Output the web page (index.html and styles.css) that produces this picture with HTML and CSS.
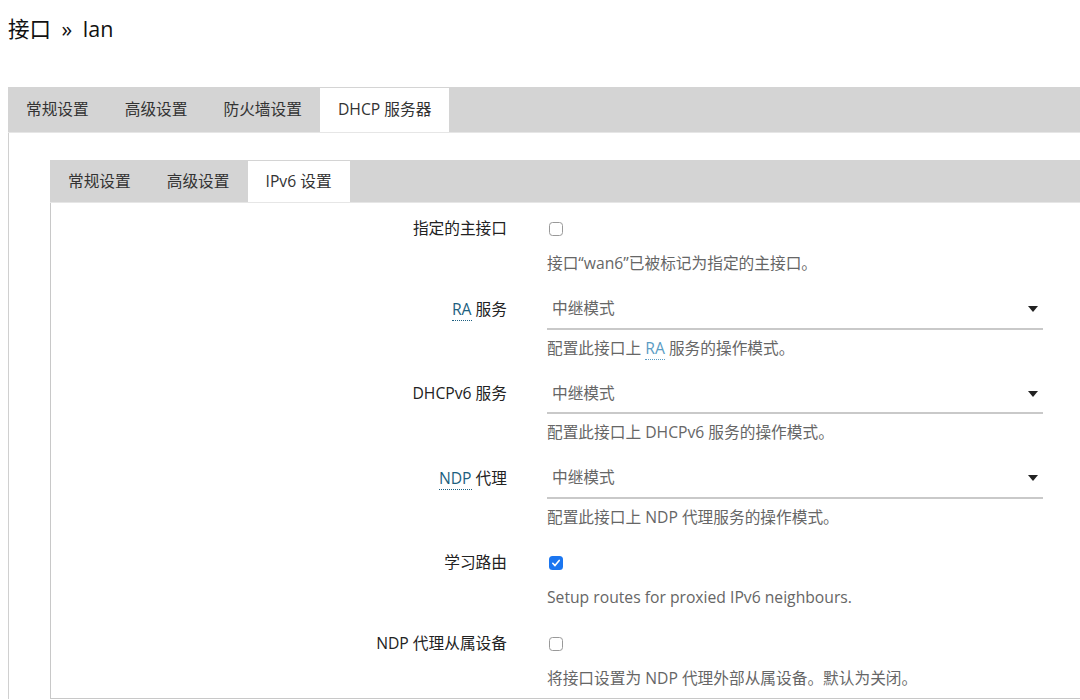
FILE: index.html
```html
<!DOCTYPE html>
<html lang="zh-CN">
<head>
    <meta charset="UTF-8">
    <meta name="viewport" content="width=device-width, initial-scale=1.0">
    <title>接口 » lan</title>
    <link rel="stylesheet" href="styles.css">
</head>
<body>
    <h2 class="page-title">接口 » lan</h2>

    <div class="outer">
        <ul class="tabs tabs-outer">
            <li class="tab">常规设置</li>
            <li class="tab">高级设置</li>
            <li class="tab">防火墙设置</li>
            <li class="tab active">DHCP 服务器</li>
        </ul>

        <div class="outer-body">
            <div class="inner">
                <ul class="tabs tabs-inner">
                    <li class="tab">常规设置</li>
                    <li class="tab">高级设置</li>
                    <li class="tab active">IPv6 设置</li>
                </ul>

                <div class="form">
                    <div class="row">
                        <label class="label">指定的主接口</label>
                        <div class="field check">
                            <div class="control"><span class="cbox"></span></div>
                            <div class="desc">接口“wan6”已被标记为指定的主接口。</div>
                        </div>
                    </div>

                    <div class="row">
                        <label class="label"><abbr>RA</abbr> 服务</label>
                        <div class="field">
                            <div class="control select"><span>中继模式</span><i class="arrow"></i></div>
                            <div class="desc">配置此接口上 <abbr class="light">RA</abbr> 服务的操作模式。</div>
                        </div>
                    </div>

                    <div class="row">
                        <label class="label">DHCPv6 服务</label>
                        <div class="field">
                            <div class="control select"><span>中继模式</span><i class="arrow"></i></div>
                            <div class="desc">配置此接口上 DHCPv6 服务的操作模式。</div>
                        </div>
                    </div>

                    <div class="row">
                        <label class="label"><abbr>NDP</abbr> 代理</label>
                        <div class="field">
                            <div class="control select"><span>中继模式</span><i class="arrow"></i></div>
                            <div class="desc">配置此接口上 NDP 代理服务的操作模式。</div>
                        </div>
                    </div>

                    <div class="row">
                        <label class="label">学习路由</label>
                        <div class="field check">
                            <div class="control">
                                <svg class="cbox-on" width="14" height="14" viewBox="0 0 14 14">
                                    <rect x="0" y="0" width="14" height="14" rx="3.5" fill="#1b76f0"/>
                                    <path d="M3.8 7.3 L6 9.6 L10.2 4.4" fill="none" stroke="#fff" stroke-width="1.6" stroke-linecap="round" stroke-linejoin="round"/>
                                </svg>
                            </div>
                            <div class="desc">Setup routes for proxied IPv6 neighbours.</div>
                        </div>
                    </div>

                    <div class="row">
                        <label class="label">NDP 代理从属设备</label>
                        <div class="field check">
                            <div class="control"><span class="cbox"></span></div>
                            <div class="desc">将接口设置为 NDP 代理外部从属设备。默认为关闭。</div>
                        </div>
                    </div>
                </div>
            </div>
        </div>
    </div>
</body>
</html>
```

FILE: styles.css
```css
body {
    margin: 0;
    font-family: "Open Sans", "Noto Sans CJK SC", sans-serif;
    font-size: 15.7px;
    color: #222;
    background: #fff;
    overflow: hidden;
}
.page-title {
    margin: 15px 0 44px 8px;
    font-size: 21.5px;
    font-weight: normal;
    line-height: 28px;
    word-spacing: 5px;
    color: #111;
}
.outer {
    margin-left: 8px;
}
.tabs {
    display: flex;
    margin: 0;
    padding: 1px 0 0 0;
    list-style: none;
    background: #d4d4d4;
    border-bottom: 1px solid #e6e6e6;
}
.tab {
    padding: 0 18px;
    color: #333;
    white-space: nowrap;
}
.tab.active {
    background: #fff;
}
.tabs-outer .tab {
    line-height: 43px;
    padding-bottom: 1px;
}
.tabs-inner .tab {
    line-height: 40px;
    padding-bottom: 1px;
}
.outer-body {
    border-left: 1px solid #d0d0d0;
    padding: 27px 0 0 41px;
}
.inner {
    border-left: 1px solid #c8c8c8;
    border-bottom: 1px solid #c8c8c8;
}
.tabs-inner {
    margin-left: -1px;
}
.form {
    display: flex;
    flex-direction: column;
    row-gap: 16.5px;
    padding: 8px 0 8.5px 0;
}
.row {
    display: grid;
    grid-template-columns: 456px 496px;
    column-gap: 40px;
}
.label {
    text-align: right;
    line-height: 34px;
    color: #222;
}
.control {
    height: 36px;
    display: flex;
    align-items: center;
}
.check .control {
    height: 38px;
    padding-bottom: 2px;
    box-sizing: border-box;
    padding-left: 2px;
}
.select {
    justify-content: space-between;
    border-bottom: 2px solid #c9c9c9;
    padding: 0 5px 4px 5px;
    box-sizing: border-box;
    height: 38px;
    color: #666;
}
.arrow {
    width: 0;
    height: 0;
    border-left: 5.5px solid transparent;
    border-right: 5.5px solid transparent;
    border-top: 6px solid #222;
    margin-top: 3px;
}
.desc {
    margin-top: 7px;
    line-height: 22px;
    padding-bottom: 1px;
    color: #666;
}
.check .desc {
    margin-top: 3px;
}
.cbox {
    display: block;
    width: 12px;
    height: 12px;
    border: 1px solid #999;
    border-radius: 3.5px;
    background: #fff;
}
.cbox-on {
    display: block;
}
abbr {
    text-decoration: none;
    color: #1d5f80;
    border-bottom: 1px dotted #1d5f80;
}
abbr.light {
    color: #5b9cc4;
    border-bottom-color: #5b9cc4;
}
```
